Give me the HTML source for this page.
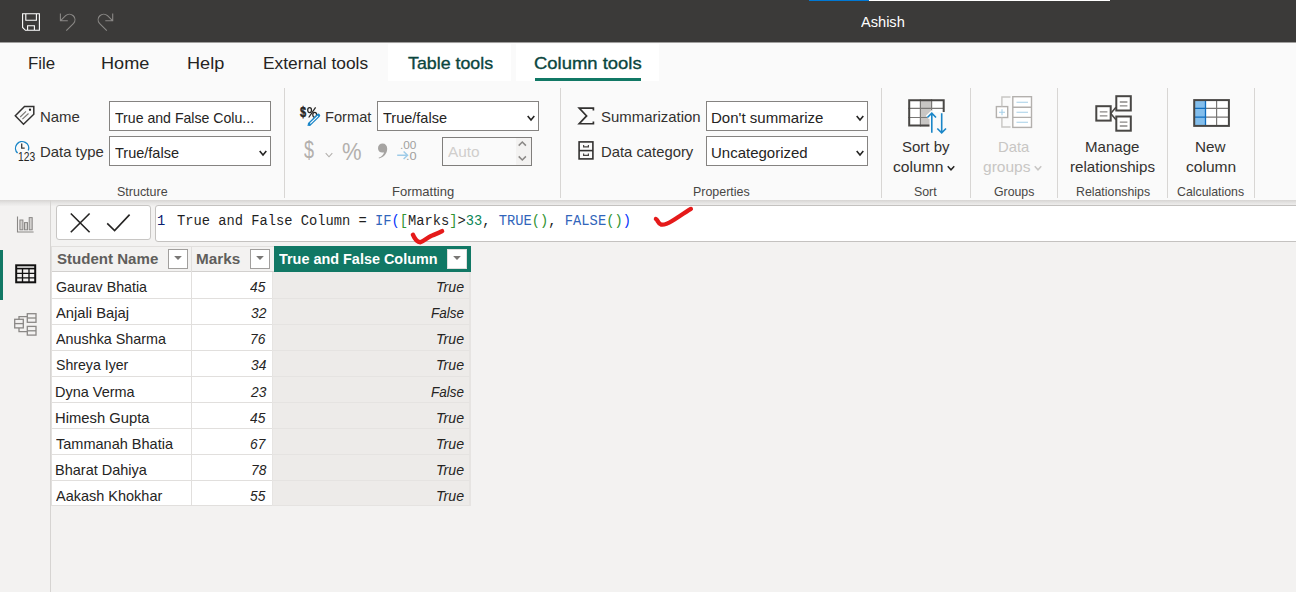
<!DOCTYPE html>
<html><head><meta charset="utf-8"><title>Power BI</title><style>html,body{margin:0;padding:0}body{width:1296px;height:592px;overflow:hidden;position:relative;background:#f3f2f1;font-family:"Liberation Sans",sans-serif}
.b{position:absolute;display:block}.t{position:absolute;white-space:pre;line-height:20px;transform-origin:0 0}</style></head><body>
<div class="b" style="left:0px;top:0px;width:1296px;height:42px;background:#3b3a39"></div>
<div class="b" style="left:0px;top:42px;width:1296px;height:1px;background:#a09f9e"></div>
<div class="b" style="left:809px;top:0px;width:60px;height:1px;background:#0078d4"></div>
<div class="b" style="left:869px;top:0px;width:241px;height:1px;background:#ffffff"></div>
<svg class="b" style="left:20px;top:11px" width="22" height="22" viewBox="0 0 22 22" fill="none"><path d="M2.6 2.7H19.4V19.3H5.4L2.6 16.5Z M5.8 2.7V9.2H16.4V2.7 M7.6 19.3V14.7H14.4V19.3" stroke="#fff" stroke-width="1.1"/></svg>
<svg class="b" style="left:56px;top:10px" width="24" height="24" viewBox="0 0 24 24" fill="none"><path d="M4.4 3.5V10.8H11.8 M4.6 10.6L9.6 5.6A5.6 5.6 0 0 1 17.6 13.4L10.3 20.7" stroke="#8a8886" stroke-width="1.1"/></svg>
<svg class="b" style="left:93px;top:10px" width="24" height="24" viewBox="0 0 24 24" fill="none"><path d="M19.7 3.5V10.8H12.3 M19.5 10.6L14.5 5.6A5.6 5.6 0 0 0 6.5 13.4L13.8 20.7" stroke="#8a8886" stroke-width="1.1"/></svg>
<span class="t" style="left:861.17px;top:12px;font-size:15px;color:#ffffff;transform:scaleX(0.9723);">Ashish</span>
<div class="b" style="left:0px;top:43px;width:1296px;height:157px;background:#fafafa"></div>
<div class="b" style="left:388px;top:44px;width:123px;height:37px;background:#fff"></div>
<div class="b" style="left:516px;top:44px;width:143px;height:37px;background:#fff"></div>
<div class="b" style="left:535px;top:78px;width:106px;height:3px;background:#117865"></div>
<span class="t" style="left:27.72px;top:54px;font-size:17px;color:#252423;transform:scaleX(0.9904);">File</span>
<span class="t" style="left:100.51px;top:54px;font-size:17px;color:#252423;transform:scaleX(1.0649);">Home</span>
<span class="t" style="left:186.51px;top:54px;font-size:17px;color:#252423;transform:scaleX(1.0653);">Help</span>
<span class="t" style="left:262.58px;top:54px;font-size:17px;color:#252423;transform:scaleX(1.0199);">External tools</span>
<span class="t" style="left:407.60px;top:54px;font-size:17px;color:#0b463e;transform:scaleX(1.0464);-webkit-text-stroke:0.35px #0b463e;">Table tools</span>
<span class="t" style="left:534.06px;top:54px;font-size:17px;color:#0b463e;transform:scaleX(1.0846);-webkit-text-stroke:0.35px #0b463e;">Column tools</span>
<div class="b" style="left:284px;top:88px;width:1px;height:110px;background:#d8d6d4"></div>
<div class="b" style="left:560px;top:88px;width:1px;height:110px;background:#d8d6d4"></div>
<div class="b" style="left:881px;top:88px;width:1px;height:110px;background:#d8d6d4"></div>
<div class="b" style="left:970px;top:88px;width:1px;height:110px;background:#d8d6d4"></div>
<div class="b" style="left:1057px;top:88px;width:1px;height:110px;background:#d8d6d4"></div>
<div class="b" style="left:1167px;top:88px;width:1px;height:110px;background:#d8d6d4"></div>
<div class="b" style="left:1254px;top:88px;width:1px;height:110px;background:#d8d6d4"></div>
<div class="b" style="left:109px;top:101px;width:162px;height:29.5px;background:#fff;border:1px solid #858381;box-sizing:border-box"></div>
<div class="b" style="left:109px;top:136px;width:162px;height:29.5px;background:#fff;border:1px solid #858381;box-sizing:border-box"></div>
<div class="b" style="left:377px;top:101px;width:162px;height:29.5px;background:#fff;border:1px solid #858381;box-sizing:border-box"></div>
<div class="b" style="left:706px;top:101px;width:162px;height:29.5px;background:#fff;border:1px solid #858381;box-sizing:border-box"></div>
<div class="b" style="left:706px;top:136px;width:162px;height:29.5px;background:#fff;border:1px solid #858381;box-sizing:border-box"></div>
<div class="b" style="left:442px;top:137px;width:90px;height:28.5px;background:#fafafa;border:1px solid #807e7c;box-sizing:border-box"></div>
<div class="b" style="left:516px;top:138px;width:15px;height:26.5px;background:#f3f2f1"></div>
<svg class="b" style="left:257.3px;top:148.1px" width="12" height="10" viewBox="0 0 12 10" fill="none"><path d="M2.7 3.0L6 7.0L9.3 3.0" stroke="#252423" stroke-width="1.6"/></svg>
<svg class="b" style="left:525.3px;top:113.1px" width="12" height="10" viewBox="0 0 12 10" fill="none"><path d="M2.7 3.0L6 7.0L9.3 3.0" stroke="#252423" stroke-width="1.6"/></svg>
<svg class="b" style="left:854.3px;top:113.1px" width="12" height="10" viewBox="0 0 12 10" fill="none"><path d="M2.7 3.0L6 7.0L9.3 3.0" stroke="#252423" stroke-width="1.6"/></svg>
<svg class="b" style="left:854.3px;top:148.1px" width="12" height="10" viewBox="0 0 12 10" fill="none"><path d="M2.7 3.0L6 7.0L9.3 3.0" stroke="#252423" stroke-width="1.6"/></svg>
<svg class="b" style="left:516px;top:139px" width="13" height="25" viewBox="0 0 13 25" fill="none"><path d="M2.7 6.6L6.3 3L9.9 6.6 M2.7 17.4L6.3 21L9.9 17.4" stroke="#8a8886" stroke-width="1.5"/></svg>
<span class="t" style="left:39.77px;top:107px;font-size:14.8px;color:#33312f;transform:scaleX(1.0107);">Name</span>
<span class="t" style="left:39.98px;top:142px;font-size:14.8px;color:#33312f;transform:scaleX(1.0055);">Data type</span>
<span class="t" style="left:115.18px;top:108px;font-size:14.8px;color:#252423;transform:scaleX(0.9538);">True and False Colu...</span>
<span class="t" style="left:115.17px;top:143px;font-size:14.8px;color:#252423;transform:scaleX(0.9805);">True/false</span>
<span class="t" style="left:324.70px;top:107px;font-size:14.8px;color:#33312f;transform:scaleX(0.9904);">Format</span>
<span class="t" style="left:383.17px;top:108px;font-size:14.8px;color:#252423;transform:scaleX(0.9805);">True/false</span>
<span class="t" style="left:448.47px;top:142px;font-size:14.8px;color:#d0cecc;transform:scaleX(1.0407);">Auto</span>
<span class="t" style="left:601.32px;top:107px;font-size:14.8px;color:#33312f;transform:scaleX(1.0098);">Summarization</span>
<span class="t" style="left:711.27px;top:108px;font-size:14.8px;color:#252423;transform:scaleX(1.0168);">Don't summarize</span>
<span class="t" style="left:600.78px;top:142px;font-size:14.8px;color:#33312f;transform:scaleX(1.0014);">Data category</span>
<span class="t" style="left:711.34px;top:143px;font-size:14.8px;color:#252423;transform:scaleX(1.0127);">Uncategorized</span>
<span class="t" style="left:116.93px;top:181.5px;font-size:12.8px;color:#484644;transform:scaleX(0.9750);">Structure</span>
<span class="t" style="left:391.68px;top:181.5px;font-size:12.8px;color:#484644;transform:scaleX(1.0163);">Formatting</span>
<span class="t" style="left:692.73px;top:181.5px;font-size:12.8px;color:#484644;transform:scaleX(0.9725);">Properties</span>
<span class="t" style="left:914.44px;top:181.5px;font-size:12.8px;color:#484644;transform:scaleX(0.9652);">Sort</span>
<span class="t" style="left:994.08px;top:181.5px;font-size:12.8px;color:#484644;transform:scaleX(0.9619);">Groups</span>
<span class="t" style="left:1075.69px;top:181.5px;font-size:12.8px;color:#484644;transform:scaleX(0.9640);">Relationships</span>
<span class="t" style="left:1177.37px;top:181.5px;font-size:12.8px;color:#484644;transform:scaleX(0.9622);">Calculations</span>
<span class="t" style="left:902.02px;top:137px;font-size:14.8px;color:#33312f;transform:scaleX(1.0135);">Sort by</span>
<span class="t" style="left:893.33px;top:157px;font-size:14.8px;color:#33312f;transform:scaleX(1.0583);">column</span>
<svg class="b" style="left:944.5px;top:162.5px" width="12" height="10" viewBox="0 0 12 10" fill="none"><path d="M2.75 3.2L6 6.8L9.25 3.2" stroke="#252423" stroke-width="1.5"/></svg>
<span class="t" style="left:998.29px;top:137px;font-size:14.8px;color:#c8c6c4;transform:scaleX(0.9986);">Data</span>
<span class="t" style="left:983.05px;top:157px;font-size:14.8px;color:#c8c6c4;transform:scaleX(1.0502);">groups</span>
<svg class="b" style="left:1031.5px;top:162.5px" width="12" height="10" viewBox="0 0 12 10" fill="none"><path d="M2.75 3.2L6 6.8L9.25 3.2" stroke="#c8c6c4" stroke-width="1.5"/></svg>
<span class="t" style="left:1085.26px;top:137px;font-size:14.8px;color:#33312f;transform:scaleX(1.0174);">Manage</span>
<span class="t" style="left:1069.99px;top:157px;font-size:14.8px;color:#33312f;transform:scaleX(1.0226);">relationships</span>
<span class="t" style="left:1195.45px;top:137px;font-size:14.8px;color:#33312f;transform:scaleX(1.0309);">New</span>
<span class="t" style="left:1186.14px;top:157px;font-size:14.8px;color:#33312f;transform:scaleX(1.0540);">column</span>
<svg class="b" style="left:13px;top:104px" width="24" height="24" viewBox="0 0 24 24" fill="none"><path d="M11.5 2.4H20.8V10.2L10.5 20.3L2.3 11.7Z" stroke="#323130" stroke-width="1.5" stroke-linejoin="miter"/><circle cx="17" cy="5.75" r="1.15" fill="#252423"/><path d="M7.2 13L13 7.4M9.4 15.2L15.5 9.5" stroke="#797775" stroke-width="1.1"/></svg>
<svg class="b" style="left:13px;top:139px" width="26" height="24" viewBox="0 0 26 24" fill="none"><path d="M4.6 14A6.6 6.6 0 1 1 15.3 11.5" stroke="#1a86c8" stroke-width="1.4"/><path d="M8.7 4.6V9.2H11.7" stroke="#3b3a39" stroke-width="1.3"/></svg>
<span class="t" style="left:18.42px;top:146.6px;font-size:12px;color:#252423;transform:scaleX(0.8558);">123</span>
<span class="t" style="left:299.96px;top:102.3px;font-size:14.5px;color:#252423;transform:scaleX(0.7564);font-weight:700;-webkit-text-stroke:0.5px #252423;">$</span>
<svg class="b" style="left:306px;top:105px" width="13" height="14" viewBox="0 0 13 14" fill="none"><ellipse cx="3.6" cy="5" rx="1.9" ry="2.5" stroke="#252423" stroke-width="1.25"/><ellipse cx="8.7" cy="9.8" rx="1.9" ry="2.5" stroke="#252423" stroke-width="1.25"/><path d="M9.6 2.3L2.7 12.5" stroke="#252423" stroke-width="1.25"/></svg>
<svg class="b" style="left:304px;top:110px" width="20" height="18" viewBox="0 0 20 18" fill="none"><path d="M5.6 14L14.4 5.4" stroke="#1a86c8" stroke-width="3.6" stroke-linecap="round"/><path d="M6.6 13.2L13.6 6.4" stroke="#fff" stroke-width="1.1" stroke-linecap="round"/><path d="M3.4 16L6.8 15.2L4.4 12.8Z" fill="#1a86c8"/></svg>
<span class="t" style="left:304.31px;top:139.6px;font-size:23px;color:#b3b0ad;transform:scaleX(0.7804);">$</span>
<svg class="b" style="left:323.4px;top:149.6px" width="12" height="10" viewBox="0 0 12 10" fill="none"><path d="M2.7 3.2L6 6.8L9.3 3.2" stroke="#b3b0ad" stroke-width="1.1"/></svg>
<span class="t" style="left:342.22px;top:141.6px;font-size:24.5px;color:#b3b0ad;transform:scaleX(0.8983);">%</span>
<svg class="b" style="left:376px;top:142px" width="13" height="18" viewBox="0 0 13 18" fill="none"><path d="M6.6 1.6C9.3 1.6 11.2 3.6 11.2 6.8C11.2 11.2 8.4 15 3 16.6L2.6 15.8C6 14.4 7.8 12.4 8 10.2C7.6 10.5 7 10.6 6.3 10.6C3.8 10.6 2 8.7 2 6.2C2 3.6 4 1.6 6.6 1.6Z" fill="#a6a4a2"/></svg>
<span class="t" style="left:399.92px;top:135px;font-size:10.5px;color:#a19f9d;transform:scaleX(1.1264);">.00</span>
<span class="t" style="left:405.73px;top:145.6px;font-size:10.5px;color:#a19f9d;transform:scaleX(1.2182);">.0</span>
<svg class="b" style="left:396px;top:150px" width="13" height="11" viewBox="0 0 13 11" fill="none"><path d="M1.2 5.3H11.5M7.6 1.5L11.6 5.3L7.6 9.1" stroke="#9ecbe8" stroke-width="1.4"/></svg>
<svg class="b" style="left:576px;top:105px" width="20" height="22" viewBox="0 0 20 22" fill="none"><path d="M17.4 5.4V3.05H3.2L10.6 10.9L3.2 18.75H17.4V16.4" stroke="#323130" stroke-width="1.7" stroke-linejoin="miter"/></svg>
<svg class="b" style="left:576px;top:139px" width="20" height="23" viewBox="0 0 20 23" fill="none"><rect x="3.1" y="2.9" width="13.8" height="17" stroke="#323130" stroke-width="1.6"/><path d="M3 11.6H17" stroke="#323130" stroke-width="1.6"/><path d="M7.6 6V7.8H12.4V6M7.6 14.6V16.4H12.4V14.6" stroke="#484644" stroke-width="1.2"/></svg>
<svg class="b" style="left:904px;top:95px" width="48" height="42" viewBox="0 0 48 42" fill="none"><path d="M5.2 5.2H39.7V17H26V30.6H5.2Z" fill="#fff"/><rect x="16.4" y="4.2" width="11.2" height="27.4" fill="#c8c6c4"/>
<path d="M16.4 4.2V31.6M27.6 4.2V17M4.2 13.4H39.7M4.2 22.5H25" stroke="#797775" stroke-width="1.2"/>
<path d="M39.7 17V5.2H5.2V30.6H26" stroke="#484644" stroke-width="2"/>
<path d="M27.8 38.5V18.6M23.4 22.5L27.8 18.2L32 22.5" stroke="#fafafa" stroke-width="4.6"/>
<path d="M27.8 37.7V18.6M23.4 22.5L27.8 18.2L32 22.5" stroke="#1a86c8" stroke-width="1.6"/>
<path d="M37.7 18.3V37.4M33.3 33.5L37.7 37.8L42 33.5" stroke="#1a86c8" stroke-width="1.6"/></svg>
<svg class="b" style="left:992px;top:93px" width="44" height="38" viewBox="0 0 44 38" fill="none"><rect x="20.8" y="3.7" width="18.7" height="30.7" stroke="#b3b0ad" stroke-width="1.4" fill="#fff"/>
<path d="M20.8 14.3H39.5M20.8 24.4H39.5" stroke="#b3b0ad" stroke-width="1.4"/>
<path d="M24.5 9.3H36M24.5 19.3H36M24.5 29.3H36" stroke="#a6cfe8" stroke-width="1.1"/>
<rect x="4.4" y="13.6" width="11.3" height="10.9" stroke="#b3b0ad" stroke-width="1.4" fill="#fff"/>
<path d="M7 19.3H13M10 16.3V22.3" stroke="#a6cfe8" stroke-width="1.1"/>
<path d="M18.5 4H9.9V13.6M9.9 24.5V34H18.5" stroke="#c8c6c4" stroke-width="1.4"/></svg>
<svg class="b" style="left:1091px;top:91px" width="44" height="44" viewBox="0 0 44 44" fill="none"><rect x="5.3" y="15.2" width="14.4" height="14.4" stroke="#484644" stroke-width="2" fill="#fff"/>
<rect x="25.3" y="5.2" width="14.5" height="14.3" stroke="#484644" stroke-width="2" fill="#fff"/>
<rect x="25.3" y="25.5" width="14.5" height="14.2" stroke="#484644" stroke-width="2" fill="#fff"/>
<path d="M19.7 22.4L25 16.2M19.7 22.4L25 28.8" stroke="#484644" stroke-width="1.6"/>
<path d="M8.8 20.9H16.4M8.8 24.8H16.4M28.8 11H36.4M28.8 14.8H36.4M28.8 31.1H36.4M28.8 35H36.4" stroke="#8a8886" stroke-width="1.3"/></svg>
<svg class="b" style="left:1189px;top:95px" width="44" height="36" viewBox="0 0 44 36" fill="none"><rect x="5.2" y="5.1" width="34.7" height="25.8" fill="#fff"/><rect x="5.2" y="5.1" width="11.3" height="25.8" fill="#83beec"/>
<path d="M16.5 13.3H39M16.5 22.2H39M27.6 5V31" stroke="#797775" stroke-width="1.2"/>
<path d="M16.5 5V31M5 13.3H16.5M5 22.2H16.5" stroke="#0f6cbd" stroke-width="1.3"/>
<rect x="5.2" y="5.1" width="34.7" height="25.8" stroke="#484644" stroke-width="2"/></svg>
<div class="b" style="left:0px;top:200px;width:1296px;height:392px;background:#f3f2f1"></div>
<div class="b" style="left:0px;top:200px;width:1296px;height:6px;background:linear-gradient(#d7d5d3,#e6e5e4 50%,#f1f0ef)"></div>
<div class="b" style="left:50px;top:200px;width:1px;height:392px;background:#d6d4d2"></div>
<div class="b" style="left:0px;top:250px;width:3px;height:50px;background:#117865"></div>
<svg class="b" style="left:15px;top:214px" width="22" height="22" viewBox="0 0 22 22" fill="none"><path d="M2.5 2.4V18H18.6" stroke="#8a8886" stroke-width="1.1"/><rect x="4.9" y="6" width="3" height="9.8" stroke="#8a8886" stroke-width="1" fill="#d2d0ce"/><rect x="9.5" y="8.6" width="3" height="7.2" stroke="#8a8886" stroke-width="1" fill="#d2d0ce"/><rect x="14.2" y="3.6" width="3" height="12.2" stroke="#8a8886" stroke-width="1" fill="#d2d0ce"/></svg>
<svg class="b" style="left:13px;top:262px" width="26" height="24" viewBox="0 0 26 24" fill="none"><rect x="3.2" y="3.3" width="19" height="17" stroke="#111" stroke-width="2"/><path d="M3 6.6H22" stroke="#111" stroke-width="1.6"/><path d="M3 11.4H22M3 15.8H22M9.5 6.6V20M16 6.6V20" stroke="#111" stroke-width="1.35"/></svg>
<svg class="b" style="left:12px;top:311px" width="28" height="28" viewBox="0 0 28 28" fill="none"><g stroke="#8a8886" stroke-width="1.3"><rect x="2.7" y="8.3" width="8.6" height="8.6"/><path d="M2.7 12.6H11.3"/>
<rect x="15.3" y="2.7" width="8.7" height="8.6"/><path d="M15.3 7H24"/>
<rect x="15.3" y="15.4" width="8.7" height="8.7"/><path d="M15.3 19.8H24"/>
<path d="M7 8.3V5.6H15.3M7 16.9V20.6H15.3"/></g></svg>
<div class="b" style="left:56px;top:205px;width:95px;height:34.5px;background:#fff;border:1px solid #c8c6c4;border-radius:3px;box-sizing:border-box"></div>
<svg class="b" style="left:68px;top:211px" width="24" height="24" viewBox="0 0 24 24" fill="none"><path d="M2.8 2.5L21.6 21.3M21.6 2.5L2.8 21.3" stroke="#252423" stroke-width="1.6"/></svg>
<svg class="b" style="left:105px;top:210px" width="28" height="24" viewBox="0 0 28 24" fill="none"><path d="M2.2 13.4L9.6 20.6L24.6 4.6" stroke="#252423" stroke-width="1.6"/></svg>
<div class="b" style="left:155px;top:205px;width:1145px;height:37px;background:#fff;border:1px solid #c4c2c0;border-radius:3px;box-sizing:border-box"></div>
<span class="t" style="left:177.09px;top:211px;font-size:14.5px;font-family:'Liberation Mono',monospace;transform:scaleX(0.9483)"><span style="color:#1f1f1f">True and False Column = </span><span style="color:#3165bb">IF</span><span style="color:#0431fa">(</span><span style="color:#319331">[</span><span style="color:#1f1f1f">Marks</span><span style="color:#319331">]</span><span style="color:#1f1f1f">&gt;</span><span style="color:#098658">33</span><span style="color:#1f1f1f">, </span><span style="color:#3165bb">TRUE</span><span style="color:#319331">()</span><span style="color:#1f1f1f">, </span><span style="color:#3165bb">FALSE</span><span style="color:#319331">()</span><span style="color:#0431fa">)</span></span>
<span class="t" style="left:157.21px;top:211px;font-size:14.5px;color:#0b216f;transform:scaleX(0.9483);font-family:'Liberation Mono',monospace;">1</span>
<svg class="b" style="left:405px;top:224px" width="44" height="24" viewBox="0 0 44 24" fill="none"><path d="M7.9 10.7C9.5 14.5 12 18.3 15.3 18.2C20 16.5 22 13.8 26 12C31 10 34 9 37.1 7.1" stroke="#e51a1a" stroke-width="4.4" stroke-linecap="round" stroke-linejoin="round"/></svg>
<svg class="b" style="left:650px;top:203px" width="46" height="28" viewBox="0 0 46 28" fill="none"><path d="M5.9 16C7.6 16.6 8 20.5 11 21.6C14.5 22.3 18 20.5 22 18C28 14.3 34 10 40.9 5.9" stroke="#e51a1a" stroke-width="4.3" stroke-linecap="round" stroke-linejoin="round"/></svg>
<div class="b" style="left:52px;top:246px;width:222px;height:26px;background:#f3f2f1;border-bottom:1px solid #d2d0ce;border-top:1px solid #e1dfdd;box-sizing:border-box"></div>
<div class="b" style="left:274px;top:246px;width:197px;height:26px;background:#117865"></div>
<div class="b" style="left:52px;top:272px;width:220px;height:234px;background:#fff"></div>
<div class="b" style="left:272px;top:272px;width:198px;height:234px;background:#edebe9"></div>
<div class="b" style="left:469px;top:272px;width:2px;height:234px;background:#e6e4e2"></div>
<div class="b" style="left:52px;top:298px;width:220px;height:1px;background:#e1dfdd"></div>
<div class="b" style="left:272px;top:298px;width:198px;height:1px;background:#e5e3e1"></div>
<div class="b" style="left:52px;top:324px;width:220px;height:1px;background:#e1dfdd"></div>
<div class="b" style="left:272px;top:324px;width:198px;height:1px;background:#e5e3e1"></div>
<div class="b" style="left:52px;top:350px;width:220px;height:1px;background:#e1dfdd"></div>
<div class="b" style="left:272px;top:350px;width:198px;height:1px;background:#e5e3e1"></div>
<div class="b" style="left:52px;top:376px;width:220px;height:1px;background:#e1dfdd"></div>
<div class="b" style="left:272px;top:376px;width:198px;height:1px;background:#e5e3e1"></div>
<div class="b" style="left:52px;top:402px;width:220px;height:1px;background:#e1dfdd"></div>
<div class="b" style="left:272px;top:402px;width:198px;height:1px;background:#e5e3e1"></div>
<div class="b" style="left:52px;top:428px;width:220px;height:1px;background:#e1dfdd"></div>
<div class="b" style="left:272px;top:428px;width:198px;height:1px;background:#e5e3e1"></div>
<div class="b" style="left:52px;top:454px;width:220px;height:1px;background:#e1dfdd"></div>
<div class="b" style="left:272px;top:454px;width:198px;height:1px;background:#e5e3e1"></div>
<div class="b" style="left:52px;top:480px;width:220px;height:1px;background:#e1dfdd"></div>
<div class="b" style="left:272px;top:480px;width:198px;height:1px;background:#e5e3e1"></div>
<div class="b" style="left:52px;top:505px;width:220px;height:1px;background:#e1dfdd"></div>
<div class="b" style="left:272px;top:505px;width:198px;height:1px;background:#e5e3e1"></div>
<div class="b" style="left:191px;top:246px;width:1px;height:260px;background:#e1dfdd"></div>
<div class="b" style="left:272px;top:272px;width:1px;height:234px;background:#e6e4e2"></div>
<div class="b" style="left:51px;top:246px;width:1px;height:260px;background:#e1dfdd"></div>
<div class="b" style="left:168px;top:249px;width:20px;height:19.5px;background:#fff;border:1px solid #a19f9d;box-sizing:border-box"></div>
<svg class="b" style="left:173px;top:255px" width="10" height="6" viewBox="0 0 10 6" fill="none"><path d="M1.1 1.1H8.9L5 5Z" fill="#797775"/></svg>
<div class="b" style="left:250px;top:249px;width:20px;height:19.5px;background:#fff;border:1px solid #a19f9d;box-sizing:border-box"></div>
<svg class="b" style="left:255px;top:255px" width="10" height="6" viewBox="0 0 10 6" fill="none"><path d="M1.1 1.1H8.9L5 5Z" fill="#797775"/></svg>
<div class="b" style="left:447px;top:249px;width:20px;height:19.5px;background:#fff;border:1px solid #e1dfdd;box-sizing:border-box"></div>
<svg class="b" style="left:452px;top:255px" width="10" height="6" viewBox="0 0 10 6" fill="none"><path d="M1.1 1.1H8.9L5 5Z" fill="#797775"/></svg>
<span class="t" style="left:56.87px;top:249px;font-size:14.8px;color:#605e5c;transform:scaleX(1.0178);font-weight:700;">Student Name</span>
<span class="t" style="left:196.48px;top:249px;font-size:14.8px;color:#605e5c;transform:scaleX(1.0322);font-weight:700;">Marks</span>
<span class="t" style="left:279.34px;top:249px;font-size:14.8px;color:#ffffff;transform:scaleX(0.9740);font-weight:700;">True and False Column</span>
<span class="t" style="left:55.88px;top:277px;font-size:14.8px;color:#252423;transform:scaleX(0.9622);">Gaurav Bhatia</span>
<span class="t" style="left:250.46px;top:277px;font-size:14.8px;color:#252423;transform:scaleX(0.9300);font-style:italic;">45</span>
<span class="t" style="left:435.73px;top:277px;font-size:14.8px;color:#252423;transform:scaleX(0.9582);font-style:italic;">True</span>
<span class="t" style="left:55.87px;top:303px;font-size:14.8px;color:#252423;transform:scaleX(0.9989);">Anjali Bajaj</span>
<span class="t" style="left:250.70px;top:303px;font-size:14.8px;color:#252423;transform:scaleX(0.9300);font-style:italic;">32</span>
<span class="t" style="left:430.89px;top:303px;font-size:14.8px;color:#252423;transform:scaleX(0.9096);font-style:italic;">False</span>
<span class="t" style="left:55.87px;top:329px;font-size:14.8px;color:#252423;transform:scaleX(0.9694);">Anushka Sharma</span>
<span class="t" style="left:250.49px;top:329px;font-size:14.8px;color:#252423;transform:scaleX(0.9300);font-style:italic;">76</span>
<span class="t" style="left:435.73px;top:329px;font-size:14.8px;color:#252423;transform:scaleX(0.9582);font-style:italic;">True</span>
<span class="t" style="left:55.96px;top:355px;font-size:14.8px;color:#252423;transform:scaleX(0.9553);">Shreya Iyer</span>
<span class="t" style="left:251.01px;top:355px;font-size:14.8px;color:#252423;transform:scaleX(0.9300);font-style:italic;">34</span>
<span class="t" style="left:435.73px;top:355px;font-size:14.8px;color:#252423;transform:scaleX(0.9582);font-style:italic;">True</span>
<span class="t" style="left:55.41px;top:382px;font-size:14.8px;color:#252423;transform:scaleX(0.9775);">Dyna Verma</span>
<span class="t" style="left:250.61px;top:382px;font-size:14.8px;color:#252423;transform:scaleX(0.9300);font-style:italic;">23</span>
<span class="t" style="left:430.89px;top:382px;font-size:14.8px;color:#252423;transform:scaleX(0.9096);font-style:italic;">False</span>
<span class="t" style="left:55.39px;top:408px;font-size:14.8px;color:#252423;transform:scaleX(0.9993);">Himesh Gupta</span>
<span class="t" style="left:250.46px;top:408px;font-size:14.8px;color:#252423;transform:scaleX(0.9300);font-style:italic;">45</span>
<span class="t" style="left:435.73px;top:408px;font-size:14.8px;color:#252423;transform:scaleX(0.9582);font-style:italic;">True</span>
<span class="t" style="left:55.57px;top:434px;font-size:14.8px;color:#252423;transform:scaleX(0.9812);">Tammanah Bhatia</span>
<span class="t" style="left:250.07px;top:434px;font-size:14.8px;color:#252423;transform:scaleX(0.9300);font-style:italic;">67</span>
<span class="t" style="left:435.73px;top:434px;font-size:14.8px;color:#252423;transform:scaleX(0.9582);font-style:italic;">True</span>
<span class="t" style="left:55.41px;top:460px;font-size:14.8px;color:#252423;transform:scaleX(0.9800);">Bharat Dahiya</span>
<span class="t" style="left:250.57px;top:460px;font-size:14.8px;color:#252423;transform:scaleX(0.9300);font-style:italic;">78</span>
<span class="t" style="left:435.73px;top:460px;font-size:14.8px;color:#252423;transform:scaleX(0.9582);font-style:italic;">True</span>
<span class="t" style="left:55.87px;top:486px;font-size:14.8px;color:#252423;transform:scaleX(0.9787);">Aakash Khokhar</span>
<span class="t" style="left:250.46px;top:486px;font-size:14.8px;color:#252423;transform:scaleX(0.9300);font-style:italic;">55</span>
<span class="t" style="left:435.73px;top:486px;font-size:14.8px;color:#252423;transform:scaleX(0.9582);font-style:italic;">True</span>
</body></html>
